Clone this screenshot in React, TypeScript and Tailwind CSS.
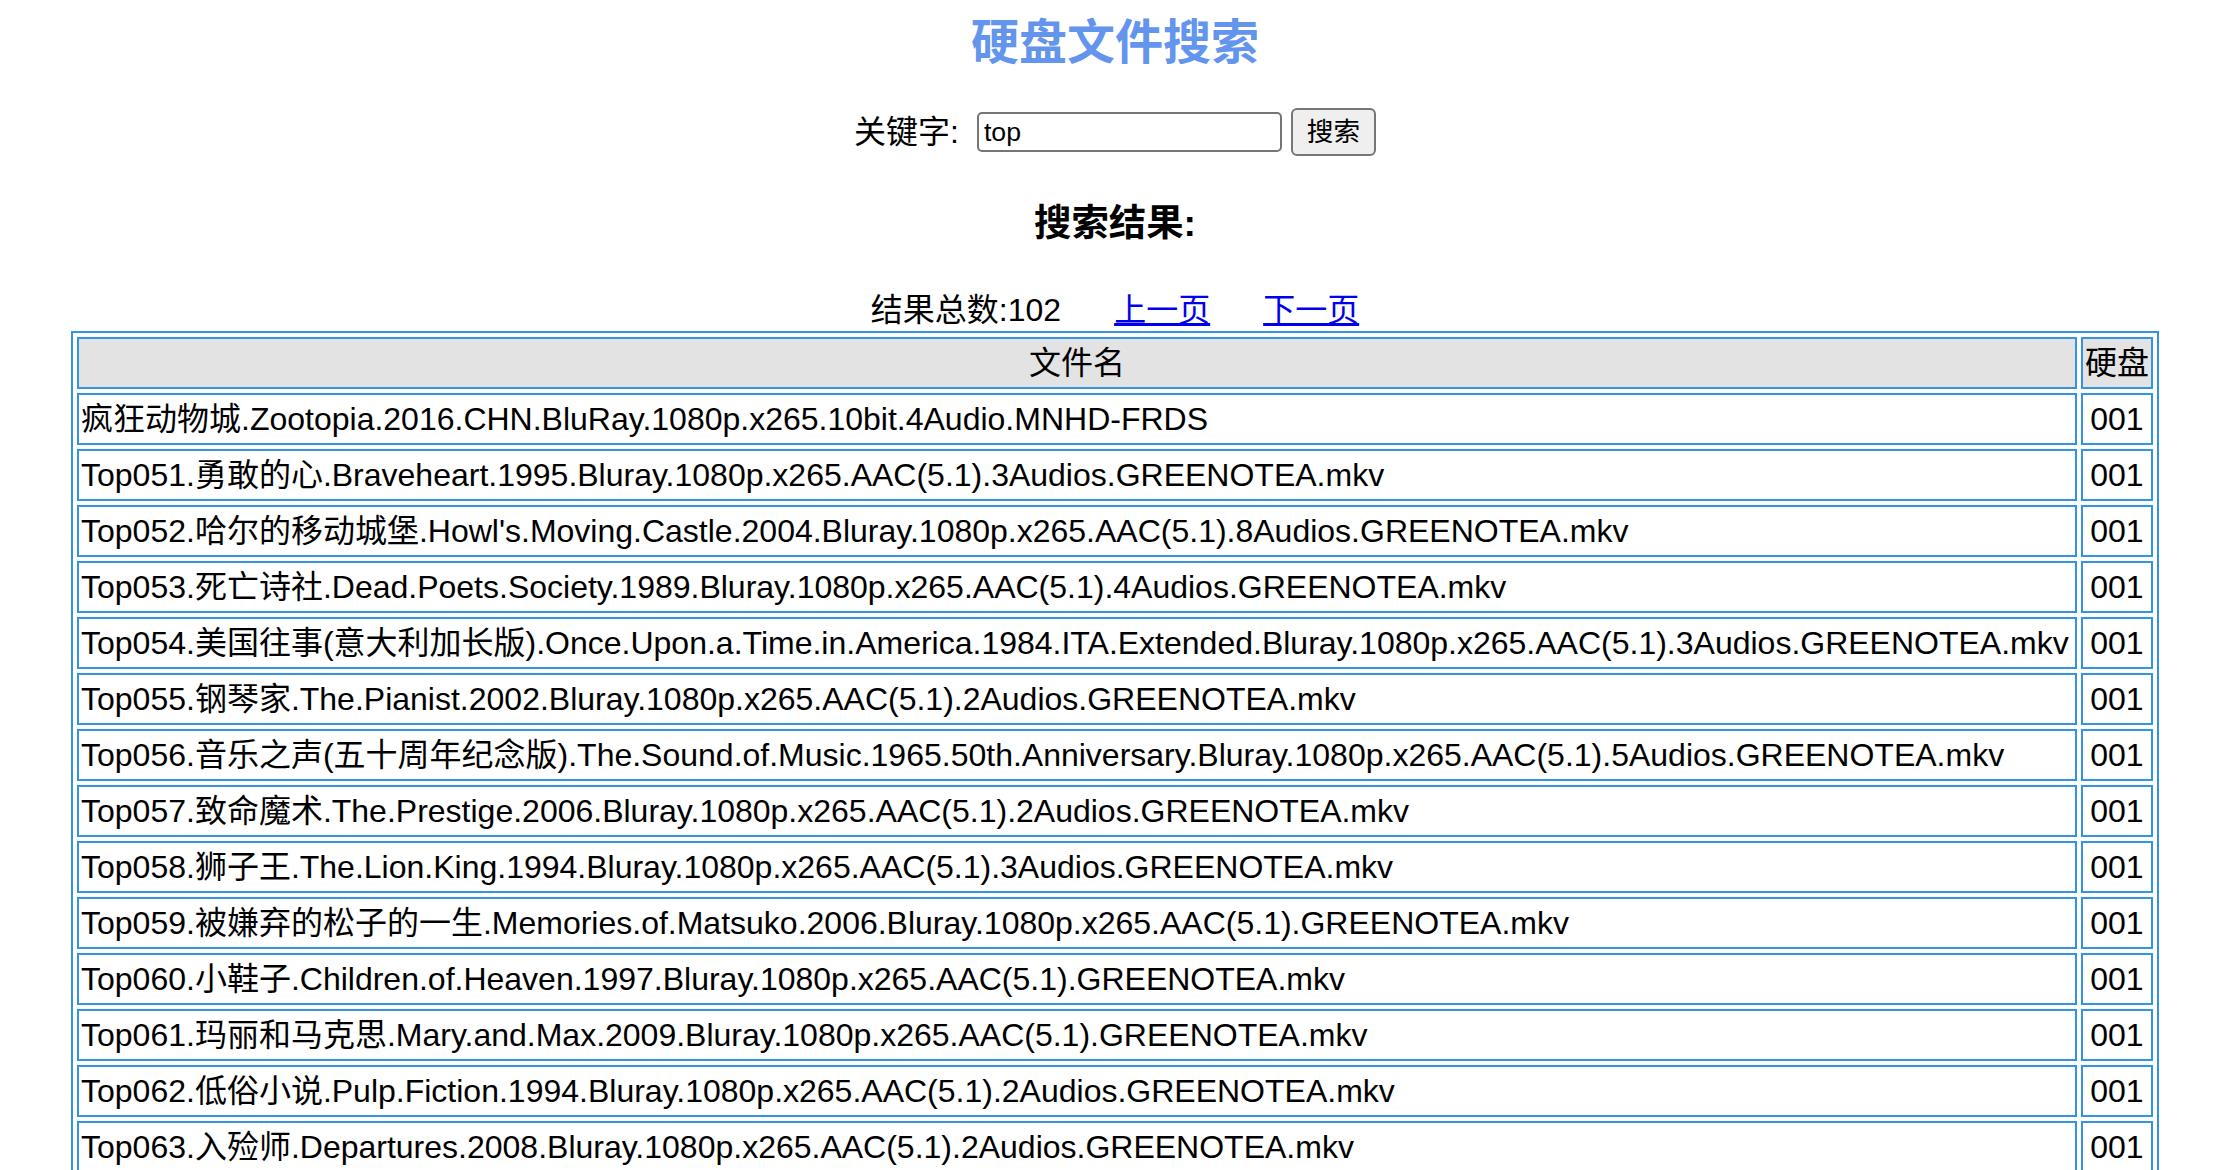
import { useState } from 'react';

const FONT = '"Liberation Sans", "Noto Sans CJK SC", sans-serif';

const files = [
  '疯狂动物城.Zootopia.2016.CHN.BluRay.1080p.x265.10bit.4Audio.MNHD-FRDS',
  'Top051.勇敢的心.Braveheart.1995.Bluray.1080p.x265.AAC(5.1).3Audios.GREENOTEA.mkv',
  "Top052.哈尔的移动城堡.Howl's.Moving.Castle.2004.Bluray.1080p.x265.AAC(5.1).8Audios.GREENOTEA.mkv",
  'Top053.死亡诗社.Dead.Poets.Society.1989.Bluray.1080p.x265.AAC(5.1).4Audios.GREENOTEA.mkv',
  'Top054.美国往事(意大利加长版).Once.Upon.a.Time.in.America.1984.ITA.Extended.Bluray.1080p.x265.AAC(5.1).3Audios.GREENOTEA.mkv',
  'Top055.钢琴家.The.Pianist.2002.Bluray.1080p.x265.AAC(5.1).2Audios.GREENOTEA.mkv',
  'Top056.音乐之声(五十周年纪念版).The.Sound.of.Music.1965.50th.Anniversary.Bluray.1080p.x265.AAC(5.1).5Audios.GREENOTEA.mkv',
  'Top057.致命魔术.The.Prestige.2006.Bluray.1080p.x265.AAC(5.1).2Audios.GREENOTEA.mkv',
  'Top058.狮子王.The.Lion.King.1994.Bluray.1080p.x265.AAC(5.1).3Audios.GREENOTEA.mkv',
  'Top059.被嫌弃的松子的一生.Memories.of.Matsuko.2006.Bluray.1080p.x265.AAC(5.1).GREENOTEA.mkv',
  'Top060.小鞋子.Children.of.Heaven.1997.Bluray.1080p.x265.AAC(5.1).GREENOTEA.mkv',
  'Top061.玛丽和马克思.Mary.and.Max.2009.Bluray.1080p.x265.AAC(5.1).GREENOTEA.mkv',
  'Top062.低俗小说.Pulp.Fiction.1994.Bluray.1080p.x265.AAC(5.1).2Audios.GREENOTEA.mkv',
  'Top063.入殓师.Departures.2008.Bluray.1080p.x265.AAC(5.1).2Audios.GREENOTEA.mkv',
];

export default function App() {
  const [keyword, setKeyword] = useState('top');

  return (
    <div className="min-h-screen bg-white text-black text-[32px]" style={{ fontFamily: FONT }}>
      {/* ─── Title ─── */}
      <h2 className="pt-[15px] text-center text-[48px] font-bold leading-[56px] text-[#6495ed]">
        硬盘文件搜索
      </h2>

      {/* ─── Search form ─── */}
      <div className="mt-[37px] flex h-[48px] items-center justify-center">
        <span className="leading-[40px]">关键字:</span>
        <input
          value={keyword}
          onChange={e => setKeyword(e.target.value)}
          className="ml-[18px] h-[40px] w-[305px] rounded-[5px] border-2 border-[#767676] bg-white px-[5px] text-[26.67px] leading-[34px] outline-none"
          style={{ fontFamily: FONT }}
        />
        <button
          className="ml-[9px] h-[48px] w-[85px] rounded-[6px] border-2 border-[#767676] bg-[#efefef] text-[26.67px] leading-[40px]"
          style={{ fontFamily: FONT }}
        >
          搜索
        </button>
      </div>

      {/* ─── Result heading ─── */}
      <h3 className="mt-[45px] text-center text-[37.4px] font-bold leading-[44px]">搜索结果:</h3>

      {/* ─── Count + paging ─── */}
      <div className="mt-[45px] flex items-center justify-center gap-[53px] leading-[40px]">
        <span>结果总数:102</span>
        <a href="#" className="text-[#0000ee] underline">上一页</a>
        <a href="#" className="text-[#0000ee] underline">下一页</a>
      </div>

      {/* ─── Result table ─── */}
      <table className="mx-auto mt-[1px] w-[2088px] border-separate border-spacing-[4px] border-2 border-[#3494e0]">
        <thead>
          <tr>
            <th className="border-2 border-[#3494e0] bg-[#e3e3e3] px-[2px] py-[2px] text-center font-normal leading-[44px]">
              文件名
            </th>
            <th className="whitespace-nowrap border-2 border-[#3494e0] bg-[#e3e3e3] px-[2px] py-[2px] text-center font-normal leading-[44px]">
              硬盘
            </th>
          </tr>
        </thead>
        <tbody>
          {files.map(name => (
            <tr key={name}>
              <td className="whitespace-nowrap border-2 border-[#3494e0] px-[2px] py-[2px] text-left leading-[44px]">
                {name}
              </td>
              <td className="whitespace-nowrap border-2 border-[#3494e0] px-[2px] py-[2px] text-center leading-[44px]">
                001
              </td>
            </tr>
          ))}
        </tbody>
      </table>
    </div>
  );
}
